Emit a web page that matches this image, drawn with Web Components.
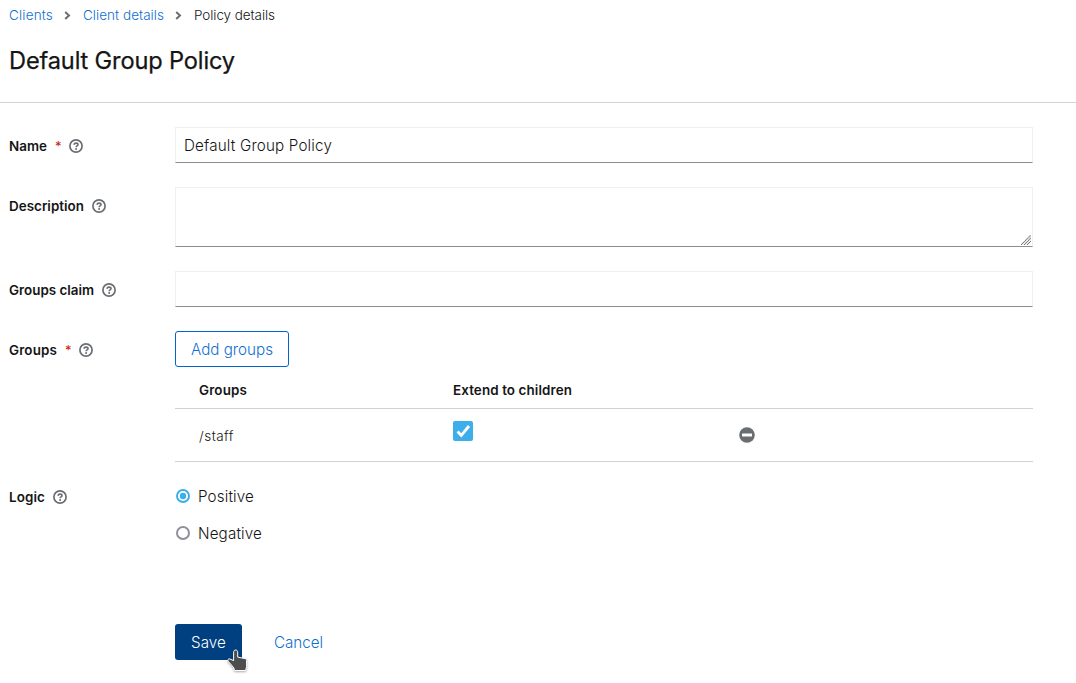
<!DOCTYPE html>
<html lang="en">
<head>
<meta charset="utf-8">
<title>Policy details</title>
<style>
body { margin: 0; background: #fff; color: #151515; font: 350 14px/21px Inter, "Open Sans", sans-serif; overflow: hidden; }
</style>
</head>
<body>
<policy-page></policy-page>
<script>
const define = (name, html, setup) => customElements.define(name, class extends HTMLElement {
  connectedCallback() {
    if (this.shadowRoot) return;
    const root = this.attachShadow({ mode: 'open' });
    root.innerHTML = html;
    if (setup) setup(this, root);
  }
});

/* A run of text tracked to occupy a given width. */
define('fit-text', `<style>:host{display:inline-block;white-space:nowrap}span{display:inline-block}</style><span><slot></slot></span>`,
  (el, root) => {
    const span = root.querySelector('span');
    const target = +el.getAttribute('w');
    const n = el.textContent.length;
    el.style.width = target + 'px';
    span.style.letterSpacing = ((target - span.getBoundingClientRect().width) / n).toFixed(3) + 'px';
  });

define('help-icon', `<style>:host{display:block;width:14px;height:14px}svg{display:block}</style>
<svg width="14" height="14" viewBox="0 0 14 14" fill="none" stroke="#6a6e73"><circle cx="7" cy="7" r="6.1" stroke-width="1.7"/><path d="M4.9 5.7C5.2 4.6 6 4.1 7 4.1c1.1 0 2 .65 2 1.6 0 1.2-1.9 1.2-1.9 2.5" stroke-width="1.6"/><circle cx="7.1" cy="10" r="1" fill="#6a6e73" stroke="none"/></svg>`);

define('crumb-divider', `<style>:host{display:block;width:7px;height:9px}svg{display:block}</style>
<svg width="7" height="9" viewBox="0 0 7 9" fill="none" stroke="#6a6e73" stroke-width="2"><path d="M1.2 .9 5 4.5 1.2 8.1"/></svg>`);

define('form-label', `<style>
:host{display:flex;align-items:center;height:21px;padding-top:9px;font-weight:600;font-size:13.4px;align-self:start}
b{font-weight:400;color:#c9190b;margin-left:8px;width:6px;font-size:13px;display:none}
:host([required]) b{display:block}
help-icon{margin:-1px 0 0 8px}
</style><slot></slot><b>*</b><help-icon></help-icon>`);

define('text-field', `<style>
:host{display:block;box-sizing:border-box;height:36px;border:1px solid #f0f0f0;border-bottom-color:#8a8d90;padding:7px 8px;font-size:15.2px;line-height:21px;position:relative}
:host([multiline]){height:60px}
svg{display:none;position:absolute;right:1px;bottom:1px}
:host([multiline]) svg{display:block}
</style><slot></slot>
<svg width="10" height="10" viewBox="0 0 10 10" stroke="#6c6c6c" stroke-width="1.1" stroke-dasharray="1.1 .4"><path d="M0 10 10 0M3 10 10 3M6 10 10 6"/></svg>`);

define('ui-button', `<style>
:host{display:flex;box-sizing:border-box;height:36px;align-items:center;justify-content:center;border-radius:3px;font-size:15.2px;color:#0f6fd0}
:host([kind=secondary]){border:1px solid #06c;width:114px}
:host([kind=primary]){background:#004080;color:#fff;width:67px}
</style><slot></slot>`);

define('check-box', `<style>:host{display:block;width:20px;height:20px}svg{display:block}</style>
<svg width="20" height="20" viewBox="0 0 20 20"><rect width="20" height="20" rx="2" fill="#3daee9"/><path d="M4.5 10.5 8.3 14.3 16 5" fill="none" stroke="#fff" stroke-width="2.8"/></svg>`);

define('radio-option', `<style>
:host{display:flex;align-items:center;height:24px;font-size:15.2px;gap:8px;padding-left:1px}
svg{display:block;margin-top:-1px;color:#8f8f9d}circle+circle{display:none}
:host([checked]) svg{color:#3daee9}:host([checked]) circle+circle{display:block}
</style><svg width="14" height="14" viewBox="0 0 14 14"><circle cx="7" cy="7" r="6" fill="none" stroke="currentColor" stroke-width="2"/><circle cx="7" cy="7" r="3.2" fill="currentColor"/></svg><slot></slot>`);

define('groups-table', `<style>
:host{display:block}
.row{display:grid;grid-template-columns:254px 286px 1fr;padding-left:24px;border-bottom:1px solid #d2d2d2;box-sizing:border-box}
.head{height:42px;padding-top:13px;font-weight:600;font-size:13.4px}
.body{height:53px;font-size:13.5px}
.body fit-text{margin-top:17px}
check-box{margin-top:12px}
.minus{margin-top:18px}
</style>
<div class="row head"><fit-text w="48">Groups</fit-text><fit-text w="119">Extend to children</fit-text></div>
<div class="row body"><fit-text w="35">/staff</fit-text><check-box></check-box>
<svg class="minus" width="16" height="16" viewBox="0 0 16 16"><circle cx="8" cy="8" r="7.8" fill="#6a6e73"/><rect x="3" y="6.5" width="10" height="3" rx=".4" fill="#fff"/></svg></div>`);

define('hand-cursor', `<style>:host{display:block;position:absolute;left:227px;top:648px;filter:drop-shadow(0 1px 1px #0005)}svg{display:block}</style>
<svg width="21" height="25" viewBox="0 0 21 25"><path d="M8.7 2C10 2 10.7 3 10.7 4.2V9.1L18 10.6C19.1 10.8 19.6 11.5 19.6 12.5V18.5L18.6 22.5H7.5L6.8 19.8 1.2 13.3C.3 12.1 1.3 10.5 2.8 10.9L6.6 12.6V4.2C6.6 3 7.3 2 8.7 2Z" fill="#4d4d4d" stroke="#fff" stroke-width="1"/></svg>`);

define('policy-page', `<style>
:host{display:block;width:1076px;height:683px;overflow:hidden;position:relative}
nav{display:flex;align-items:center;height:21px;padding:5px 0 0 9px;font-size:13.5px}
a{color:#0f6fd0}
crumb-divider{margin:0 12px 0 11px}
h1{margin:0;padding:19px 0 0 9px;height:57px;font-size:23.6px;line-height:31px;font-weight:400;border-bottom:1px solid #d2d2d2}
h1 fit-text{-webkit-text-stroke:.25px #151515}
form{display:grid;grid-template-columns:166px 858px;padding:24px 0 0 9px;row-gap:24px}
.radios{display:grid;gap:13px;margin-top:-2px}
.actions{display:flex;gap:32px;padding:79px 0 0 175px}
</style>
<nav><a><fit-text w="44">Clients</fit-text></a><crumb-divider></crumb-divider><a><fit-text w="81">Client details</fit-text></a><crumb-divider></crumb-divider><fit-text w="81">Policy details</fit-text></nav>
<h1><fit-text w="226">Default Group Policy</fit-text></h1>
<form>
<form-label required><fit-text w="38">Name</fit-text></form-label><text-field><fit-text w="148">Default Group Policy</fit-text></text-field>
<form-label><fit-text w="75">Description</fit-text></form-label><text-field multiline></text-field>
<form-label><fit-text w="85">Groups claim</fit-text></form-label><text-field></text-field>
<form-label required><fit-text w="48">Groups</fit-text></form-label>
<div><ui-button kind="secondary"><fit-text w="82">Add groups</fit-text></ui-button><groups-table></groups-table></div>
<form-label style="padding-top:1px"><fit-text w="36">Logic</fit-text></form-label>
<div class="radios"><radio-option checked><fit-text w="56">Positive</fit-text></radio-option><radio-option><fit-text w="64">Negative</fit-text></radio-option></div>
</form>
<div class="actions"><ui-button kind="primary"><fit-text w="35">Save</fit-text></ui-button><ui-button><fit-text w="49">Cancel</fit-text></ui-button></div>
<hand-cursor></hand-cursor>`);
</script>
</body>
</html>
